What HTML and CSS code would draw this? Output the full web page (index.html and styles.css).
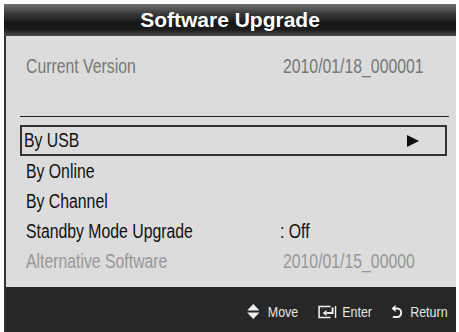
FILE: index.html
```html
<!DOCTYPE html>
<html lang="en">
<head>
    <meta charset="UTF-8">
    <title>Software Upgrade</title>
    <link rel="stylesheet" href="styles.css">
</head>
<body>
    <div class="panel">
        <div class="title">Software Upgrade</div>
        <div class="content">
            <div class="row info">
                <span class="txt">Current Version</span>
                <span class="txt">2010/01/18_000001</span>
            </div>
            <div class="divider"></div>
            <div class="row menu selected">
                <span class="txt">By USB</span>
                <svg class="arrow" width="12" height="12" viewBox="0 0 12 12"><polygon points="0,0 12,6 0,12" fill="#111"/></svg>
            </div>
            <div class="row menu"><span class="txt">By Online</span></div>
            <div class="row menu"><span class="txt">By Channel</span></div>
            <div class="row menu">
                <span class="txt">Standby Mode Upgrade</span>
                <span class="txt off">: Off</span>
            </div>
            <div class="row info dim">
                <span class="txt">Alternative Software</span>
                <span class="txt">2010/01/15_00000</span>
            </div>
        </div>
        <div class="footer">
            <div class="hints">
                <span class="hint">
                    <svg width="15" height="15" viewBox="0 0 12 15" preserveAspectRatio="none"><polygon points="6,0 12,6.5 0,6.5" fill="#eee"/><polygon points="0,8.5 12,8.5 6,15" fill="#eee"/></svg>
                    Move
                </span>
                <span class="hint enter">
                    <svg width="24" height="14" viewBox="0 0 20 14" preserveAspectRatio="none"><path d="M13 1.5H1.5V12.5H13" fill="none" stroke="#eee" stroke-width="1.6"/><polygon points="5,8 9,5 9,11" fill="#eee"/><path d="M9 8H15V2.5" fill="none" stroke="#eee" stroke-width="2"/><path d="M18 1V13" stroke="#eee" stroke-width="1.4"/></svg>
                    Enter
                </span>
                <span class="hint">
                    <svg width="13" height="14" viewBox="0 0 12 14" preserveAspectRatio="none"><polygon points="0,3.5 4.5,0 4.5,7" fill="#eee"/><path d="M4 3.5H6.5A4.2 4.2 0 0 1 6.5 12H1.5" fill="none" stroke="#eee" stroke-width="2.2"/></svg>
                    Return
                </span>
            </div>
        </div>
    </div>
</body>
</html>
```

FILE: styles.css
```css
body {
    margin: 0;
    background: #fff;
    font-family: "Liberation Sans", Arial, sans-serif;
}
.panel {
    margin: 4px 0 0 4px;
    width: 452px;
}
.title {
    height: 32px;
    line-height: 32px;
    text-align: center;
    font-weight: bold;
    font-size: 21px;
    color: #fff;
    background: linear-gradient(#707070 0%, #3a3a3a 30%, #161616 60%, #1c1c1c 80%, #4a4a4a 100%);
}
.content {
    background: #dcdcdc;
    border-left: 2px solid #333;
    padding: 15px 7px 11px 14px;
}
/* the TV font is a narrow grotesque, so squeeze Liberation Sans */
.txt {
    display: inline-block;
    white-space: nowrap;
    transform: scaleX(0.79);
    transform-origin: left center;
}
.row {
    display: grid;
    grid-template-columns: 257px 1fr;
    align-items: center;
    height: 30px;
    font-size: 20px;
    color: #111;
    padding-left: 6px;
}
.info {
    color: #777;
}
.info.dim {
    color: #979797;
}
.divider {
    height: 1px;
    background: #222;
    margin: 35px 0 8px;
}
.menu.selected {
    border: 2px solid #333;
    height: 27px;
    padding-left: 2px;
    margin-right: 2px;
    grid-template-columns: 1fr auto;
    padding-right: 26px;
}
.off {
    margin-left: -3px;
}
.footer {
    background: #272727;
    border-left: 2px solid #333;
    height: 46px;
    display: flex;
    align-items: center;
    justify-content: flex-end;
    padding-right: 8px;
    padding-top: 3px;
    box-sizing: border-box;
    color: #e6e6e6;
    font-size: 15px;
}
.hints {
    display: flex;
    align-items: center;
    gap: 23px;
    transform: scaleX(0.83);
    transform-origin: right center;
}
.hint {
    display: flex;
    align-items: center;
    gap: 10px;
}
.hint.enter {
    gap: 6px;
}
```
